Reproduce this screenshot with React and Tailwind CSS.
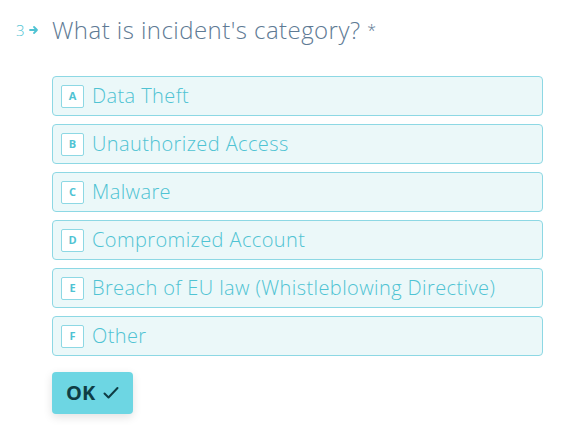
export default function App() {
  const options = [
    ['A', 'Data Theft'],
    ['B', 'Unauthorized Access'],
    ['C', 'Malware'],
    ['D', 'Compromized Account'],
    ['E', 'Breach of EU law (Whistleblowing Directive)'],
    ['F', 'Other'],
  ];

  return (
    <main className="min-h-screen bg-white font-['Open_Sans','Lato',sans-serif]">
      <div className="pl-[16px] pr-[33px] pt-[14px]">
        <div className="flex items-center">
          <div className="flex w-[36px] items-center text-[#4fc3d3]">
            <span className="text-[15px] font-light leading-none">3</span>
            <svg width="10" height="10" viewBox="0 0 10 10" className="ml-[4px]">
              <path d="M1 5h7M5 2l3 3-3 3" fill="none" stroke="#4fc3d3" strokeWidth="1.8" strokeLinecap="round" strokeLinejoin="round" />
            </svg>
          </div>
          <h1 className="text-[24px] font-light leading-[32px] tracking-[0.45px] text-[#5e7a94]">
            What is incident's category? <span className="text-[16px] align-top">*</span>
          </h1>
        </div>

        <div className="ml-[36px] mt-[30px] flex flex-col gap-[8px]">
          {options.map(([key, label]) => (
            <div
              key={key}
              className="flex h-[40px] items-center rounded-[4px] border border-[#8dd8e4] bg-[#ebf8f9] pl-[8px]"
            >
              <span className="flex h-[23px] w-[23px] items-center justify-center rounded-[2px] border border-[#8dd8e4] bg-white text-[11px] font-bold text-[#4fc3d3]">
                {key}
              </span>
              <span className="ml-[8px] text-[20px] font-light tracking-[0.4px] text-[#4fc3d3]">{label}</span>
            </div>
          ))}
        </div>

        <button className="ml-[36px] mt-[16px] flex h-[42px] items-center gap-[8px] rounded-[4px] bg-[#6dd6e3] px-[14px] text-[20px] font-bold text-[#0f3d45] shadow-[0_3px_10px_rgba(0,0,0,0.12)]">
          OK
          <svg width="16" height="14" viewBox="0 0 16 14">
            <path d="M1.5 7.5l4 4 9-9.5" fill="none" stroke="#0f3d45" strokeWidth="2" strokeLinecap="round" strokeLinejoin="round" />
          </svg>
        </button>
      </div>
    </main>
  );
}
